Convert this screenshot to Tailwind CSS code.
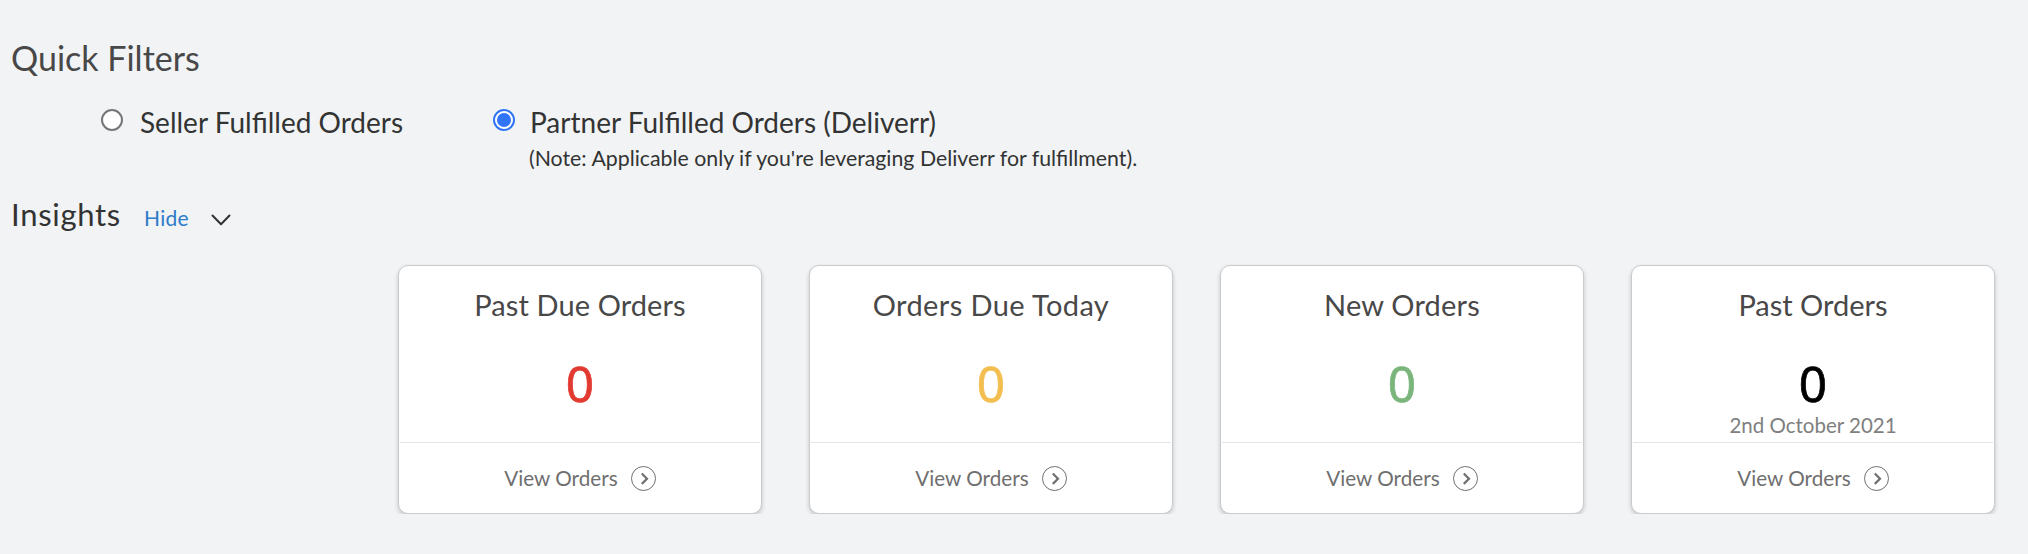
<!DOCTYPE html>
<html lang="en">
  <head>
    <meta charset="UTF-8" />
    <title>Orders</title>
    <meta name="viewport" content="width=device-width, initial-scale=1" />
    <script src="https://cdn.jsdelivr.net/npm/@tailwindcss/browser@4"></script>
  </head>
  <body class="min-h-screen bg-[#f1f3f5] font-['Lato','Noto_Sans',sans-serif] text-[#333]">
    <!-- Quick filters -->
    <section class="pt-[38px] pl-[11px]">
      <h2 class="text-[34px] leading-[40px] text-[#484848]">Quick Filters</h2>
      <div class="mt-[27px] flex items-start">
        <label class="ml-[90px] flex w-[392px] items-start">
          <input type="radio" name="fulfilled" class="mt-1 size-[22px] appearance-none rounded-full border-2 border-[#767676] bg-white" />
          <span class="ml-[17px] text-[28px] leading-[34px] whitespace-nowrap">Seller Fulfilled Orders</span>
        </label>
        <label class="flex items-start">
          <span class="mt-1 flex size-[22px] items-center justify-center rounded-full border-2 border-[#3174f5] bg-white">
            <span class="size-[14px] rounded-full bg-[#3174f5]"></span>
          </span>
          <span class="ml-[14px]">
            <span class="ml-px block text-[28px] leading-[34px] whitespace-nowrap">Partner Fulfilled Orders (Deliverr)</span>
            <span class="mt-1.5 block text-[21.3px] leading-[26px] whitespace-nowrap">(Note: Applicable only if you're leveraging Deliverr for fulfillment).</span>
          </span>
        </label>
      </div>
    </section>

    <!-- Insights -->
    <section>
      <div class="mt-[23px] flex items-baseline pl-[11px]">
        <h2 class="text-[31px] leading-[40px] tracking-[0.7px]">Insights</h2>
        <a href="#" class="ml-[23px] text-[21px] tracking-[0.3px] text-[#2f7bc8]">Hide</a>
        <svg class="ml-[22px] h-3 w-5" viewBox="0 0 20 12" fill="none" stroke="#333" stroke-width="2" stroke-linecap="round" stroke-linejoin="round">
          <path d="M1.5 1.5 10 10.2 18.5 1.5" />
        </svg>
      </div>

      <div class="mt-[23px] flex gap-[47px] overflow-hidden pt-2 pl-[398px]">
        <div class="h-[249px] w-[364px] shrink-0 rounded-[10px] border border-[#c9cccf] bg-white text-center shadow-[0_2px_4px_rgba(0,0,0,0.2)]">
          <div class="h-[176px] pt-[21px]">
            <h3 class="text-[29px] leading-9 tracking-[0.1px] text-[#484848]">Past Due Orders</h3>
            <p class="mt-[30px] font-['Noto_Sans'] text-[49.5px] leading-[60px] text-[#e23a30] [-webkit-text-stroke:0.7px]">0</p>
          </div>
          <a href="#" class="mx-px flex h-[71px] items-center justify-center gap-[13px] border-t border-[#e4e4e4] text-[20.7px] leading-[26px] text-[#6f6f6f]">
            <span>View Orders</span>
            <svg class="size-[25px]" viewBox="0 0 25 25" fill="none" stroke="#6f6f6f"><circle cx="12.5" cy="12.5" r="12" /><path d="M10.8 7.5 16 12.7l-5.2 5.2" stroke-width="2.2" /></svg>
          </a>
        </div>

        <div class="h-[249px] w-[364px] shrink-0 rounded-[10px] border border-[#c9cccf] bg-white text-center shadow-[0_2px_4px_rgba(0,0,0,0.2)]">
          <div class="h-[176px] pt-[21px]">
            <h3 class="text-[29px] leading-9 tracking-[0.4px] text-[#484848]">Orders Due Today</h3>
            <p class="mt-[30px] font-['Noto_Sans'] text-[49.5px] leading-[60px] text-[#f3be50] [-webkit-text-stroke:0.7px]">0</p>
          </div>
          <a href="#" class="mx-px flex h-[71px] items-center justify-center gap-[13px] border-t border-[#e4e4e4] text-[20.7px] leading-[26px] text-[#6f6f6f]">
            <span>View Orders</span>
            <svg class="size-[25px]" viewBox="0 0 25 25" fill="none" stroke="#6f6f6f"><circle cx="12.5" cy="12.5" r="12" /><path d="M10.8 7.5 16 12.7l-5.2 5.2" stroke-width="2.2" /></svg>
          </a>
        </div>

        <div class="h-[249px] w-[364px] shrink-0 rounded-[10px] border border-[#c9cccf] bg-white text-center shadow-[0_2px_4px_rgba(0,0,0,0.2)]">
          <div class="h-[176px] pt-[21px]">
            <h3 class="text-[29px] leading-9 tracking-[0.2px] text-[#484848]">New Orders</h3>
            <p class="mt-[30px] font-['Noto_Sans'] text-[49.5px] leading-[60px] text-[#7ab67c] [-webkit-text-stroke:0.7px]">0</p>
          </div>
          <a href="#" class="mx-px flex h-[71px] items-center justify-center gap-[13px] border-t border-[#e4e4e4] text-[20.7px] leading-[26px] text-[#6f6f6f]">
            <span>View Orders</span>
            <svg class="size-[25px]" viewBox="0 0 25 25" fill="none" stroke="#6f6f6f"><circle cx="12.5" cy="12.5" r="12" /><path d="M10.8 7.5 16 12.7l-5.2 5.2" stroke-width="2.2" /></svg>
          </a>
        </div>

        <div class="h-[249px] w-[364px] shrink-0 rounded-[10px] border border-[#c9cccf] bg-white text-center shadow-[0_2px_4px_rgba(0,0,0,0.2)]">
          <div class="h-[176px] pt-[21px]">
            <h3 class="text-[29px] leading-9 text-[#484848]">Past Orders</h3>
            <p class="mt-[30px] font-['Noto_Sans'] text-[49.5px] leading-[60px] text-black [-webkit-text-stroke:0.7px]">0</p>
            <p class="text-[20.5px] leading-6 text-[#808080]">2nd October 2021</p>
          </div>
          <a href="#" class="mx-px flex h-[71px] items-center justify-center gap-[13px] border-t border-[#e4e4e4] text-[20.7px] leading-[26px] text-[#6f6f6f]">
            <span>View Orders</span>
            <svg class="size-[25px]" viewBox="0 0 25 25" fill="none" stroke="#6f6f6f"><circle cx="12.5" cy="12.5" r="12" /><path d="M10.8 7.5 16 12.7l-5.2 5.2" stroke-width="2.2" /></svg>
          </a>
        </div>
      </div>
    </section>
  </body>
</html>
